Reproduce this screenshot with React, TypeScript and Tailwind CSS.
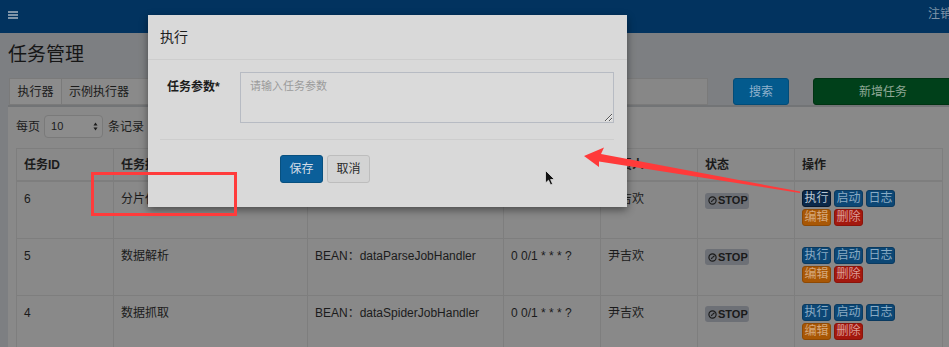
import React from 'react';

type Row = { id: string; desc: string; mode: string; cron: string; owner: string; active?: boolean };

const rows: Row[] = [
  { id: '6', desc: '分片任务', mode: 'BEAN：shardingJobHandler', cron: '0 0/1 * * * ?', owner: '尹吉欢', active: true },
  { id: '5', desc: '数据解析', mode: 'BEAN：dataParseJobHandler', cron: '0 0/1 * * * ?', owner: '尹吉欢' },
  { id: '4', desc: '数据抓取', mode: 'BEAN：dataSpiderJobHandler', cron: '0 0/1 * * * ?', owner: '尹吉欢' },
];

function StopBadge() {
  return (
    <span className="inline-flex items-center h-[16px] w-[44px] pl-[3px] rounded-[3px] bg-[#6d7076] text-[#1a1a1a] text-[11px] font-bold leading-none">
      <svg width="9" height="9" viewBox="0 0 10 10" className="mr-[1px]">
        <circle cx="5" cy="5" r="4" fill="none" stroke="#1a1a1a" strokeWidth="1.3" />
        <line x1="5" y1="5" x2="7.3" y2="2.8" stroke="#1a1a1a" strokeWidth="1.2" />
        <line x1="5" y1="5" x2="3.5" y2="6.5" stroke="#1a1a1a" strokeWidth="1.2" />
      </svg>
      STOP
    </span>
  );
}

function ActionButtons({ active }: { active?: boolean }) {
  const base = 'w-[29px] h-[17px] rounded-[3px] border text-[12px] leading-[15px] text-center';
  return (
    <div className="flex flex-wrap w-[96px] gap-x-[3px] gap-y-[2px]">
      <span className={active ? `${base} bg-[#0b2849] border-[#06182e] text-[#b9c6d3]` : `${base} bg-[#0c4775] border-[#0a3a60] text-[#8aabc4]`}>执行</span>
      <span className={`${base} bg-[#0c4775] border-[#0a3a60] text-[#8aabc4]`}>启动</span>
      <span className={`${base} bg-[#0c4775] border-[#0a3a60] text-[#8aabc4]`}>日志</span>
      <span className={`${base} bg-[#a85705] border-[#8e4904] text-[#d6a87c]`}>编辑</span>
      <span className={`${base} bg-[#a3180e] border-[#8a130a] text-[#dc9c96]`}>删除</span>
    </div>
  );
}

export default function App() {
  const th = 'border border-[#7e7e7e] border-b-[2px] px-[7px] pt-[7px] pb-[6px] text-left align-top font-bold';
  const td = 'border border-[#7e7e7e] px-[7px] pt-[8px] text-left align-top font-normal';
  return (
    <div className="relative w-[949px] h-[347px] overflow-hidden bg-[#7d7f82] text-[12px] text-[#1b1b1b] font-['Liberation_Sans','Noto_Sans_CJK_SC',sans-serif]">
      {/* navbar */}
      <header className="h-[33px] bg-[#02335f] flex items-center pl-[8px]">
        <div className="flex flex-col gap-[1.5px] w-[10px] shrink-0 mb-[3px]">
          <span className="h-[1.5px] bg-[#8095a8]" />
          <span className="h-[1.5px] bg-[#8095a8]" />
          <span className="h-[1.5px] bg-[#8095a8]" />
        </div>
        <div className="flex-1" />
        <span className="shrink-0 text-[#7f93a8] text-[12px] whitespace-nowrap mr-[-3px] mb-[5px]">注销</span>
      </header>

      <main className="pl-[8px]">
        <h1 className="text-[19px] leading-none mt-[12px] font-normal text-[#161616]">任务管理</h1>

        {/* filter row */}
        <div className="flex h-[27px] mt-[14px]">
          <div className="shrink-0 ml-[1px] flex w-[231px]">
            <span className="shrink-0 w-[53px] flex items-center justify-center bg-[#8c8c8c] border border-[#7a7a7a]">执行器</span>
            <span className="flex-1 flex items-center pl-[7px] bg-[#8a8a8a] border border-l-0 border-[#7a7a7a]">示例执行器</span>
          </div>
          <div className="shrink-0 ml-[10px] w-[220px] bg-[#878787] border border-[#7a7a7a]" />
          <div className="shrink-0 ml-[10px] w-[228px] bg-[#878787] border border-[#7a7a7a]" />
          <span className="shrink-0 ml-[25px] w-[56px] flex items-center justify-center rounded-[3px] bg-[#035a8d] border border-[#024c78] text-[#8fb1cc]">搜索</span>
          <span className="shrink-0 ml-[24px] w-[140px] flex items-center justify-center rounded-[3px] bg-[#00401a] border border-[#003312] text-[#8fa896]">新增任务</span>
        </div>

        {/* box */}
        <section className="w-[942px] h-[300px] bg-[#898989] border-t-[2px] border-[#727476] px-[8px] pt-[8px]">
          <div className="flex items-center h-[23px]">
            <span>每页</span>
            <div className="shrink-0 ml-[4px] w-[59px] h-[23px] rounded-[4px] border border-[#7a7a7a] bg-[#8c8c8c] flex items-center pl-[6px] pr-[4px] text-[11px]">
              <span className="flex-1">10</span>
              <svg width="5" height="9" viewBox="0 0 5 9">
                <path d="M2.5 0.5 L4.5 3.5 L0.5 3.5 Z" fill="#1b1b1b" />
                <path d="M2.5 8.5 L4.5 5.5 L0.5 5.5 Z" fill="#1b1b1b" />
              </svg>
            </div>
            <span className="ml-[5px]">条记录</span>
          </div>

          <table className="mt-[10px] w-[926px] border-collapse table-fixed">
            <colgroup>
              <col className="w-[97px]" />
              <col className="w-[194px]" />
              <col className="w-[196px]" />
              <col className="w-[97px]" />
              <col className="w-[97px]" />
              <col className="w-[97px]" />
              <col className="w-[148px]" />
            </colgroup>
            <thead>
              <tr className="h-[30px]">
                <th className={th}>任务ID</th>
                <th className={th}>任务描述</th>
                <th className={th}>运行模式</th>
                <th className={th}>Cron</th>
                <th className={th}>负责人</th>
                <th className={th}>状态</th>
                <th className={th}>操作</th>
              </tr>
            </thead>
            <tbody>
              {rows.map((r) => (
                <tr key={r.id} className="h-[57px]">
                  <td className={td}>{r.id}</td>
                  <td className={td}>{r.desc}</td>
                  <td className={td}>{r.mode}</td>
                  <td className={td}>{r.cron}</td>
                  <td className={td}>{r.owner}</td>
                  <td className={`${td} pt-[10px]`}><StopBadge /></td>
                  <td className={td}><ActionButtons active={r.active} /></td>
                </tr>
              ))}
            </tbody>
          </table>
        </section>
      </main>

      {/* modal */}
      <div className="absolute left-[148px] top-[15px] w-[479px] h-[192px] bg-[#d9d9d9] shadow-[0_3px_8px_rgba(0,0,0,0.45)]">
        <div className="h-[45px] border-b border-[#cdcdcd] flex items-center pl-[12px] text-[14px] text-[#1c1c1c]">执行</div>
        <div className="pt-[12px] pl-[19px] pr-[13px] flex">
          <label className="shrink-0 w-[73px] pt-[6px] font-bold text-[#1c1c1c]">任务参数*</label>
          <textarea
            readOnly
            placeholder="请输入任务参数"
            className="shrink-0 w-[374px] h-[51px] border border-[#b7bbc3] bg-[#dadada] px-[9px] pt-[5px] text-[11px] outline-none placeholder:text-[#9a9a9a]"
          />
        </div>
        <div className="mt-[16px] ml-[12px] mr-[13px] border-t border-[#cdcdcd]" />
        <div className="mt-[15px] pl-[132px] flex gap-[4px]">
          <span className="w-[43px] h-[28px] rounded-[3px] bg-[#0b5f9a] border border-[#08507f] text-[#d3dde7] flex items-center justify-center">保存</span>
          <span className="w-[43px] h-[28px] rounded-[3px] bg-[#d3d3d3] border border-[#bdbdbd] text-[#2a2a2a] flex items-center justify-center">取消</span>
        </div>
      </div>

      {/* annotation rectangle */}
      <div className="absolute left-[91px] top-[172px] w-[146px] h-[44px] border-[3px] border-[#ff3b3b]" />

      {/* annotation arrow */}
      <svg className="absolute left-0 top-0 pointer-events-none" width="949" height="347" viewBox="0 0 949 347">
        <polygon
          points="584,156 604,147.5 601,154 800,191.6 800,193 599,161.5 599,167"
          fill="#ff3a3a"
        />
      </svg>

      {/* mouse cursor */}
      <svg className="absolute left-[545px] top-[170px]" width="11" height="17" viewBox="0 0 11 17">
        <path d="M0.5 0.5 L0.5 13 L3.5 10.2 L5.6 15 L7.6 14.1 L5.6 9.5 L9.5 9.5 Z" fill="#111" stroke="#e0e0e0" strokeWidth="0.8" />
      </svg>
    </div>
  );
}
